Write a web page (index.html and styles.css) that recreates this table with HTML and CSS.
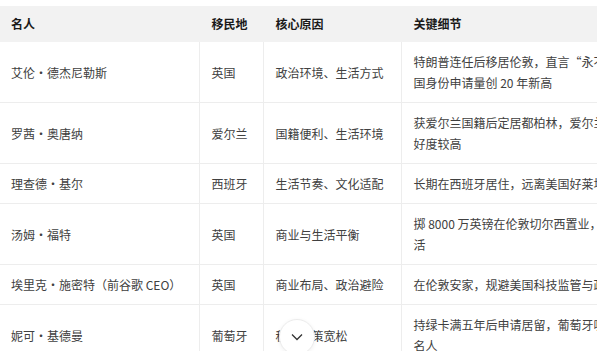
FILE: index.html
```
<!DOCTYPE html>
<html lang="zh-CN">

<head>
    <meta charset="UTF-8">
    <meta name="viewport" content="width=device-width, initial-scale=1.0">
    <title>名人移民</title>
    <link rel="stylesheet" href="styles.css">
</head>

<body>
    <div class="wrap">
        <table class="tbl">
            <colgroup>
                <col class="c1">
                <col class="c2">
                <col class="c3">
                <col class="c4">
            </colgroup>
            <thead>
                <tr>
                    <th>名人</th>
                    <th>移民地</th>
                    <th>核心原因</th>
                    <th>关键细节</th>
                </tr>
            </thead>
            <tbody>
                <tr>
                    <td>艾伦・德杰尼勒斯</td>
                    <td>英国</td>
                    <td>政治环境、生活方式</td>
                    <td>特朗普连任后移居伦敦，直言“永不回来”，英国身份申请量创 20 年新高</td>
                </tr>
                <tr>
                    <td>罗茜・奥唐纳</td>
                    <td>爱尔兰</td>
                    <td>国籍便利、生活环境</td>
                    <td>获爱尔兰国籍后定居都柏林，爱尔兰对美国人友好度较高</td>
                </tr>
                <tr>
                    <td>理查德・基尔</td>
                    <td>西班牙</td>
                    <td>生活节奏、文化适配</td>
                    <td>长期在西班牙居住，远离美国好莱坞喧嚣</td>
                </tr>
                <tr>
                    <td>汤姆・福特</td>
                    <td>英国</td>
                    <td>商业与生活平衡</td>
                    <td>掷 8000 万英镑在伦敦切尔西置业，享受英式生活</td>
                </tr>
                <tr>
                    <td>埃里克・施密特（前谷歌 CEO）</td>
                    <td>英国</td>
                    <td>商业布局、政治避险</td>
                    <td>在伦敦安家，规避美国科技监管与政治压力</td>
                </tr>
                <tr>
                    <td>妮可・基德曼</td>
                    <td>葡萄牙</td>
                    <td>税收政策宽松</td>
                    <td>持绿卡满五年后申请居留，葡萄牙吸引众多美国名人</td>
                </tr>
            </tbody>
        </table>
    </div>

    <button class="more">
        <svg width="12" height="8" viewBox="0 0 12 8">
            <path d="M1 1.5 L6 6.5 L11 1.5" fill="none" stroke="#333" stroke-width="1.3" />
        </svg>
    </button>
</body>

</html>
```

FILE: styles.css
```
body {
    margin: 0;
    background-color: #fff;
    font-family: "Noto Sans CJK SC", sans-serif;
    font-size: 12px;
    color: #404040;
}

.wrap {
    width: 597px;
    overflow: hidden;
    padding-top: 6px;
}

.tbl {
    table-layout: fixed;
    width: 681px;
    border-collapse: collapse;
    font-size: 12px;
}

.c1 {
    width: 199px;
}

.c2 {
    width: 64px;
}

.c3 {
    width: 138px;
}

.c4 {
    width: 280px;
}

.tbl th {
    background-color: #f2f2f2;
    color: #1a1a1a;
    font-weight: bold;
    text-align: left;
    line-height: 22px;
    padding: 7px 12px;
    border-left: 1px solid #f2f2f2;
}

.tbl td {
    line-height: 21px;
    padding: 9px 12px;
    vertical-align: middle;
    border-bottom: 1px solid #ededed;
    border-left: 1px solid #ededed;
}

.tbl th:first-child,
.tbl td:first-child {
    border-left: none;
    padding-left: 11px;
}

.more {
    position: absolute;
    left: 279px;
    top: 319px;
    width: 36px;
    height: 36px;
    border-radius: 50%;
    border: 1px solid #ececec;
    background-color: #fff;
    box-shadow: 0 1px 4px rgba(0, 0, 0, 0.06);
    padding: 0;
    display: flex;
    align-items: center;
    justify-content: center;
}
```
